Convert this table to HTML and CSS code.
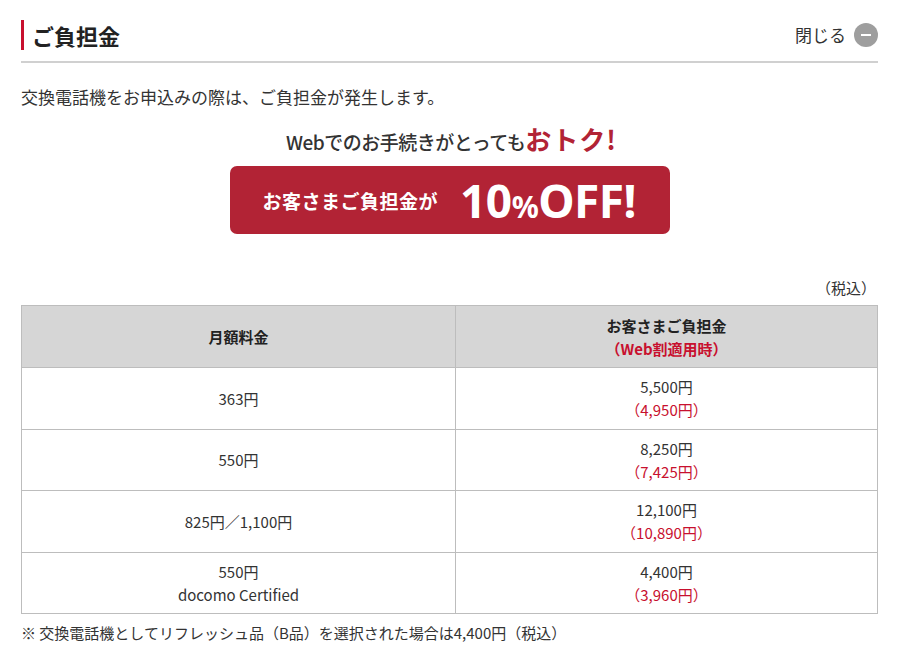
FILE: index.html
```html
<!DOCTYPE html>
<html lang="ja">
<head>
<meta charset="utf-8">
<title>ご負担金</title>
<link rel="stylesheet" href="styles.css">
</head>
<body>
<div class="wrap">
  <div class="head">
    <h2 class="title">ご負担金</h2>
    <a class="close">閉じる<span class="close-icon"></span></a>
  </div>
  <p class="lead">交換電話機をお申込みの際は、ご負担金が発生します。</p>
  <div class="banner">
    <div class="banner-head">Webでのお手続きがとっても<span class="otoku">おトク!</span></div>
    <div class="banner-box"><span class="bb-text">お客さまご負担金が</span><span class="bb-off">10<span class="pct">%</span>OFF!</span></div>
  </div>
  <p class="tax">（税込）</p>
  <table class="fee">
    <thead>
      <tr><th class="c1">月額料金</th><th class="c2">お客さまご負担金<br><span class="red">（Web割適用時）</span></th></tr>
    </thead>
    <tbody>
      <tr><td>363円</td><td>5,500円<br><span class="red">（4,950円）</span></td></tr>
      <tr><td>550円</td><td>8,250円<br><span class="red">（7,425円）</span></td></tr>
      <tr><td>825円／1,100円</td><td>12,100円<br><span class="red">（10,890円）</span></td></tr>
      <tr><td>550円<br>docomo Certified</td><td>4,400円<br><span class="red">（3,960円）</span></td></tr>
    </tbody>
  </table>
  <p class="note">※ 交換電話機としてリフレッシュ品（B品）を選択された場合は4,400円（税込）</p>
</div>
</body>
</html>
```

FILE: styles.css
```css
html, body {
  margin: 0;
  padding: 0;
  background: #fff;
}
body {
  font-family: "Noto Sans CJK JP", "Noto Sans", sans-serif;
  color: #333;
}
.wrap {
  padding: 0 22px 0 21px;
}
.head {
  display: flex;
  align-items: center;
  justify-content: space-between;
  padding-top: 20px;
  padding-bottom: 11px;
  border-bottom: 2px solid #d0d0d0;
}
.title {
  margin: 0;
  font-size: 22px;
  line-height: 30px;
  font-weight: 700;
  color: #222;
  border-left: 3px solid #c8102e;
  padding-left: 8px;
}
.close {
  display: flex;
  align-items: center;
  font-size: 17px;
  line-height: 24px;
  color: #333;
}
.close-icon {
  position: relative;
  display: inline-block;
  width: 24px;
  height: 24px;
  border-radius: 50%;
  background: #9e9e9e;
  margin-left: 8px;
}
.close-icon::after {
  content: "";
  position: absolute;
  left: 7px;
  top: 11px;
  width: 10px;
  height: 2px;
  background: #fff;
}
.lead {
  margin: 22px 0 0;
  font-size: 17px;
  line-height: 24px;
}
.banner {
  display: flex;
  flex-direction: column;
  align-items: center;
  margin-top: 14px;
}
.banner-head {
  font-size: 19px;
  line-height: 32px;
  font-weight: 500;
  color: #333;
  letter-spacing: -0.5px;
  padding-left: 4px;
}
.otoku {
  font-size: 26px;
  font-weight: 700;
  color: #b22335;
  letter-spacing: 1px;
}
.banner-box {
  margin-top: 8px;
  width: 440px;
  height: 68px;
  border-radius: 7px;
  background: #b22335;
  color: #fff;
  display: flex;
  align-items: center;
  box-sizing: border-box;
  padding-left: 33px;
}
.bb-text {
  font-size: 19px;
  font-weight: 700;
  letter-spacing: 0.5px;
}
.bb-off {
  margin-left: 22px;
  font-family: "Noto Sans", "Open Sans", sans-serif;
  font-size: 46px;
  font-weight: 700;
  line-height: 1;
  letter-spacing: -0.5px;
}
.pct {
  font-size: 30px;
}
.tax {
  margin: 43px 0 0;
  text-align: right;
  padding-right: 2px;
  font-size: 15px;
  line-height: 22px;
}
.fee {
  margin-top: 6px;
  width: 100%;
  border-collapse: collapse;
  font-size: 15px;
  line-height: 23px;
}
.fee th, .fee td {
  border: 1px solid #bdbdbd;
  text-align: center;
  vertical-align: middle;
  padding: 0 8px;
  height: 61.5px;
  box-sizing: border-box;
}
.fee th {
  background: #d6d6d6;
  font-weight: 700;
  color: #222;
  height: 62px;
}
.fee .c1 {
  width: 434px;
}
.red {
  color: #c8102e;
}
.note {
  margin: 8px 0 0;
  font-size: 15px;
  line-height: 22px;
}
```
